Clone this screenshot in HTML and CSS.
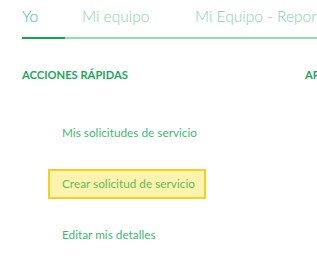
FILE: index.html
```html
<!DOCTYPE html>
<html lang="es">
<head>
<meta charset="utf-8">
<link rel="stylesheet" href="styles.css">
</head>
<body>
<div class="page">
  <nav class="tabs">
    <a class="tab tab-yo active">Yo</a>
    <a class="tab tab-team">Mi equipo</a>
    <a class="tab tab-reports">Mi Equipo - Reportes</a>
  </nav>
  <div class="columns">
    <section class="col">
      <h2 class="heading">ACCIONES RÁPIDAS</h2>
      <ul class="links">
        <li><a class="link">Mis solicitudes de servicio</a></li>
        <li><a class="link focused">Crear solicitud de servicio</a></li>
        <li><a class="link">Editar mis detalles</a></li>
      </ul>
    </section>
    <section class="col col2">
      <h2 class="heading">APROBACIONES</h2>
    </section>
  </div>
</div>
</body>
</html>
```
FILE: styles.css
```css
html, body { margin: 0; padding: 0; background: #fff; }
body { font-family: "Lato", "Open Sans", sans-serif; overflow: hidden; width: 317px; height: 271px; }
.page { padding-left: 22px; }
.tabs { display: flex; gap: 17px; white-space: nowrap; border-bottom: 2px solid #93ddb3; height: 37px; box-sizing: content-box; }
.tab { flex: none; font-size: 15.5px; font-weight: 300; color: #7fd4a2; padding-top: 5px; line-height: 22px; height: 37px; box-sizing: border-box; }
.tab-yo { width: 43px; }
.tab-team { width: 96px; }
.tab.active { color: #35b79c; border-bottom: 2px solid #12a650; height: 39px; }
.columns { display: flex; }
.col { width: 283px; flex: none; }
.heading { margin: 29px 0 0; font-size: 11.2px; font-weight: 700; color: #1ba65a; line-height: 13px; white-space: nowrap; }
.links { list-style: none; margin: 37px 0 0; padding: 0; }
.links li { margin-bottom: 21px; }
.link { display: inline-block; font-size: 11.8px; color: #3cba72; padding: 6px 9px 6px 12px; margin-left: 26px; border: 2px solid transparent; line-height: 14px; }
.link.focused { background: #fcf3ae; border-color: #f8cf1c; color: #63bb5e; }
```
